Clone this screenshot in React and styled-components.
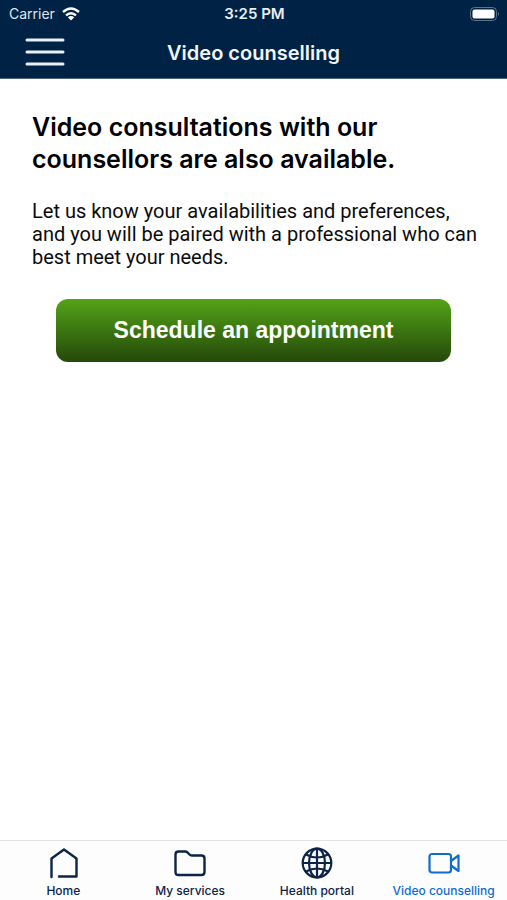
import styled, { createGlobalStyle } from 'styled-components';

const GlobalStyle = createGlobalStyle`
    * {
        box-sizing: border-box;
    }
    body {
        margin: 0;
        background: #fff;
        color: #0b0b0c;
        font-family: Inter, "Liberation Sans", sans-serif;
    }
`

const Screen = styled.div`
    display: flex;
    flex-direction: column;
    min-height: 100vh;
`

const TopBar = styled.header`
    background: #002244;
    color: #fff;
    border-bottom: 1px solid #4d647c;
`

const StatusBar = styled.div`
    display: grid;
    grid-template-columns: 1fr auto 1fr;
    align-items: center;
    height: 27px;
    padding: 0 7px 0 9px;
    font-size: 14px;
    line-height: 20px;
`

const Carrier = styled.span`
    display: flex;
    align-items: center;
    gap: 7px;
    color: #dfe5ec;
`

const Clock = styled.time`
    font-size: 15px;
    font-weight: 600;
    color: #e9edf2;
`

const Battery = styled.svg`
    justify-self: end;
`

const TitleBar = styled.div`
    display: grid;
    grid-template-columns: 1fr auto 1fr;
    align-items: center;
    height: 51px;
    padding: 0 24px;
`

const MenuButton = styled.button`
    justify-self: start;
    display: flex;
    padding: 0;
    border: 0;
    background: none;
    color: #e8f0f8;
    cursor: pointer;
`

const Title = styled.h1`
    margin: 0;
    font-size: 20px;
    line-height: 24px;
    font-weight: 600;
    color: #f2f5f8;
`

const Content = styled.main`
    flex: 1;
    padding: 32px 24px 32px 32px;
`

const Heading = styled.h2`
    margin: 0 0 25px;
    font-size: 25px;
    line-height: 32px;
    font-weight: 600;
    color: #000;
`

const Text = styled.p`
    margin: 0 0 30px;
    font-family: Roboto, "Liberation Sans", sans-serif;
    font-size: 20px;
    line-height: 23px;
`

const Actions = styled.div`
    padding: 0 32px 0 24px;
`

const PrimaryButton = styled.button`
    width: 100%;
    height: 63px;
    padding: 0;
    border: 0;
    border-radius: 12px;
    background: linear-gradient(#53a318, #24480a);
    color: #fff;
    font-family: "Liberation Sans", Arial, sans-serif;
    font-size: 23px;
    font-weight: 700;
    cursor: pointer;
`

const TabBar = styled.nav`
    display: grid;
    grid-template-columns: repeat(4, 1fr);
    height: 60px;
    border-top: 1px solid #e3e3e5;
    background: #fdfdfe;
`

const Tab = styled.a`
    display: flex;
    flex-direction: column;
    align-items: center;
    gap: 4px;
    padding-top: 6px;
    font-size: 12px;
    line-height: 16px;
    font-weight: 500;
    white-space: nowrap;
    text-decoration: none;
    color: ${({ $active }) => ($active ? '#0f6cd0' : '#0b2447')};
`

const TabIcon = styled.svg`
    width: 32px;
    height: 32px;
    fill: none;
    stroke: currentColor;
    stroke-width: 2.4;
    stroke-linecap: round;
    stroke-linejoin: round;
`

const tabs = [
    {
        key: 'home',
        label: 'Home',
        icon: <path d="M4.500 30V11.500L17 2.500L29.500 11.500V29.500H12" />,
    },
    {
        key: 'services',
        label: 'My services',
        icon: <path d="M4.500 4.500H11.500Q13 4.500 14 6L15.500 7.500Q16.300 8.500 18 8.500H27.500Q30.500 8.500 30.500 11.500V25Q30.500 28 27.500 28H4.500Q1.500 28 1.500 25V7.500Q1.500 4.500 4.500 4.500Z" />,
    },
    {
        key: 'portal',
        label: 'Health portal',
        icon: (
            <g strokeWidth="2.200">
                <circle cx="16" cy="16" r="14.300" />
                <ellipse cx="16" cy="16" rx="8" ry="14.300" />
                <path d="M16 2V30M2 16H30M5 7.500Q16 13.500 27 7.500M5 24.500Q16 18.500 27 24.500" />
            </g>
        ),
    },
    {
        key: 'video',
        label: 'Video counselling',
        active: true,
        icon: (
            <g strokeWidth="2.200">
                <rect x="1.500" y="7" width="21.500" height="18.500" rx="2.500" />
                <path d="M23 14L30.500 8.500V24L23 18.500" />
            </g>
        ),
    },
];

const App = () => {
    return (
        <Screen>
            <GlobalStyle />

            <TopBar>
                <StatusBar>
                    <Carrier>
                        Carrier
                        <svg width="18" height="14" viewBox="0 0 18 14" fill="none" stroke="#fff" strokeWidth="2.4" aria-hidden="true">
                            <path d="M1 5Q9 -2.200 17 5" />
                            <path d="M4 8.400Q9 4 14 8.400" />
                            <path d="M9 13.500L5.800 10.300Q9 7.800 12.200 10.300Z" fill="#fff" stroke="none" />
                        </svg>
                    </Carrier>
                    <Clock>3:25 PM</Clock>
                    <Battery width="30" height="14" viewBox="0 0 30 14" aria-hidden="true">
                        <rect x="0.500" y="0.500" width="26" height="13" rx="4" fill="none" stroke="#5f7388" />
                        <rect x="2.500" y="2.500" width="22" height="9" rx="2" fill="#fff" />
                        <path d="M28 5Q30 7 28 9Z" fill="#5f7388" />
                    </Battery>
                </StatusBar>

                <TitleBar>
                    <MenuButton type="button" aria-label="Menu">
                        <svg width="42" height="30" viewBox="0 0 42 30" stroke="currentColor" strokeWidth="3" strokeLinecap="round">
                            <path d="M3 2H39M3 14H39M3 26H39" />
                        </svg>
                    </MenuButton>
                    <Title>Video counselling</Title>
                </TitleBar>
            </TopBar>

            <Content>
                <Heading>Video consultations with our counsellors are also available.</Heading>
                <Text>
                    Let us know your availabilities and preferences, and you will be paired with
                    a professional who can best meet your needs.
                </Text>
                <Actions>
                    <PrimaryButton type="button">Schedule an appointment</PrimaryButton>
                </Actions>
            </Content>

            <TabBar>
                {tabs.map(({ key, label, icon, active }) => (
                    <Tab key={key} href={`#${key}`} $active={active} aria-current={active ? 'page' : undefined}>
                        <TabIcon viewBox="0 0 32 32" aria-hidden="true">{icon}</TabIcon>
                        {label}
                    </Tab>
                ))}
            </TabBar>
        </Screen>
    );
}

export default App;
